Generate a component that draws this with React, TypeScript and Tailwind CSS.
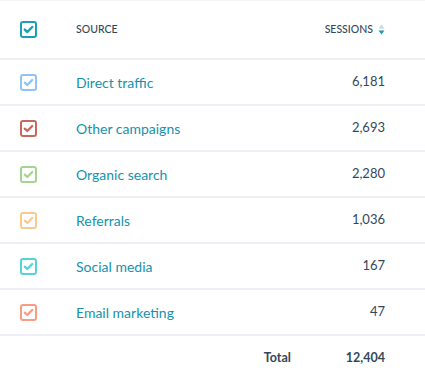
export default function App() {
  const rows = [
    { name: "Direct traffic", value: "6,181", color: "#8ec5f5" },
    { name: "Other campaigns", value: "2,693", color: "#c46a5c" },
    { name: "Organic search", value: "2,280", color: "#a5d394" },
    { name: "Referrals", value: "1,036", color: "#fbc98e" },
    { name: "Social media", value: "167", color: "#55d2da" },
    { name: "Email marketing", value: "47", color: "#fb9b83" },
  ];

  const Check = ({ color, strong }: { color: string; strong?: boolean }) => (
    <svg width="17" height="17" viewBox="0 0 17 17">
      <rect
        x="1"
        y="1"
        width="15"
        height="15"
        rx="2"
        fill="white"
        stroke={color}
        strokeWidth="2"
      />
      <path
        d="M4.8 8.7 L7.3 11 L12.2 6"
        fill="none"
        stroke={color}
        strokeWidth={strong ? 2.5 : 2.3}
        strokeLinecap="round"
        strokeLinejoin="round"
      />
    </svg>
  );

  return (
    <div
      className="w-[425px] h-[379px] bg-white border-t border-[#f3f4f8] text-[#33475b]"
      style={{ fontFamily: "Lato, 'Open Sans', sans-serif" }}
    >
      <div className="h-[59px] flex items-center border-b-2 border-[#eeeff4]">
        <div className="w-[76px] pl-[20px] flex">
          <Check color="#1a9fb5" strong />
        </div>
        <div className="flex-1 text-[10.5px] font-medium">SOURCE</div>
        <div className="pr-[40px] flex items-center gap-[5px] text-[10.5px] font-medium">
          SESSIONS
          <svg width="7" height="11" viewBox="0 0 7 11">
            <path d="M3.5 0.5 L6.5 4.5 L0.5 4.5 Z" fill="#cbd6e2" />
            <path d="M0.5 6.5 L6.5 6.5 L3.5 10.5 Z" fill="#1a9fb5" />
          </svg>
        </div>
      </div>
      {rows.map((r) => (
        <div
          key={r.name}
          className="h-[46px] flex items-center border-b-2 border-[#eeeff4]"
        >
          <div className="w-[76px] pl-[20px] flex">
            <Check color={r.color} />
          </div>
          <div className="flex-1 text-[14px] text-[#1592ad]">{r.name}</div>
          <div className="pr-[40px] text-[13px]">{r.value}</div>
        </div>
      ))}
      <div className="h-[42px] pt-[2px] flex items-center text-[12.5px] font-bold">
        <div className="flex-1" />
        <div className="w-[82px]">Total</div>
        <div className="pr-[40px]">12,404</div>
      </div>
    </div>
  );
}
